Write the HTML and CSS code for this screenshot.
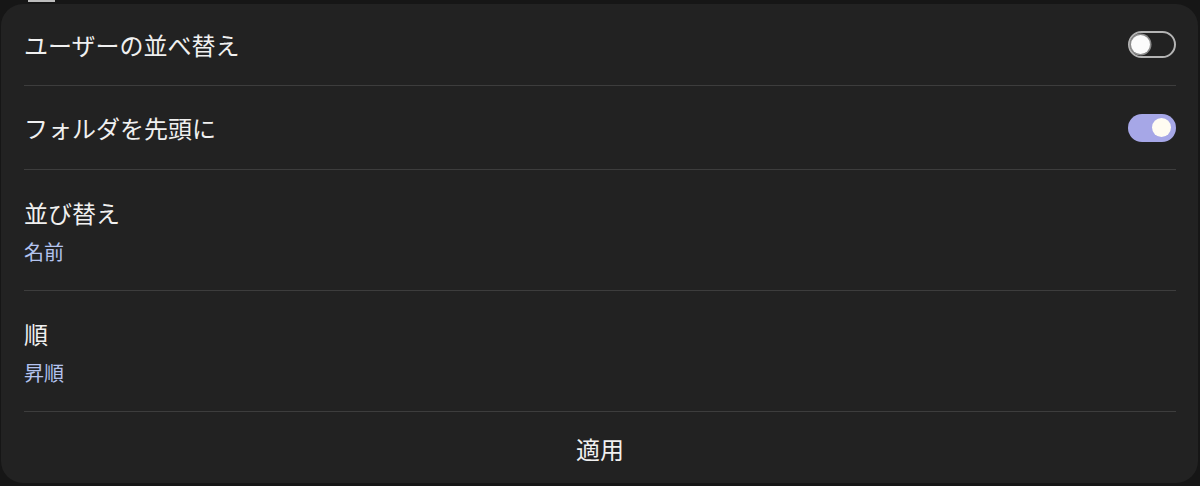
FILE: index.html
```html
<!DOCTYPE html>
<html lang="ja">
<head>
    <meta charset="UTF-8">
    <meta name="viewport" content="width=device-width, initial-scale=1.0">
    <title>並べ替え</title>
    <link rel="stylesheet" href="styles.css">
</head>
<body>
    <div class="pegangan"></div>

    <div class="panel">
        <div class="baris">
            <span class="judul">ユーザーの並べ替え</span>
            <div class="sakelar"><span class="bulat"></span></div>
        </div>
        <div class="baris">
            <span class="judul">フォルダを先頭に</span>
            <div class="sakelar aktif"><span class="bulat"></span></div>
        </div>
        <div class="baris pilihan">
            <span class="judul">並び替え</span>
            <span class="nilai">名前</span>
        </div>
        <div class="baris pilihan">
            <span class="judul">順</span>
            <span class="nilai">昇順</span>
        </div>
        <button class="tombol-terapkan">適用</button>
    </div>
</body>
</html>
```

FILE: styles.css
```css
body {
    font-family: "Noto Sans CJK JP", "Noto Sans", sans-serif;
    background-color: #161616;
    margin: 0;
    padding: 4px 2px 3px 1px;
    height: 486px;
    box-sizing: border-box;
}

.pegangan {
    position: absolute;
    top: 0;
    left: 28px;
    width: 27px;
    height: 2px;
    background: #bdbdbd;
}

.panel {
    background: #222222;
    border-radius: 22px;
    height: 100%;
    padding: 0 22px 0 23px;
    box-sizing: border-box;
    display: flex;
    flex-direction: column;
}

.baris {
    display: flex;
    align-items: center;
    justify-content: space-between;
    border-bottom: 1px solid #3d3d3d;
    height: 81px;
}

.baris + .baris {
    height: 83px;
}

.baris.pilihan {
    flex-direction: column;
    align-items: flex-start;
    justify-content: flex-start;
    height: 121px;
    padding-top: 27px;
    box-sizing: border-box;
    gap: 9px;
}

.judul {
    color: #f0f0f0;
    font-size: 24px;
    line-height: 32px;
}

.nilai {
    color: #b3c3ef;
    font-size: 20px;
    line-height: 28px;
}

.sakelar {
    width: 48px;
    height: 27px;
    border: 2px solid #b4b4b4;
    border-radius: 14px;
    box-sizing: border-box;
    display: flex;
    align-items: center;
    padding-left: 1px;
}

.sakelar .bulat {
    width: 19px;
    height: 19px;
    border-radius: 50%;
    background: #fbfbfb;
    box-shadow: 0 0 0 1.5px #8a8a8a;
}

.sakelar.aktif {
    border: none;
    height: 28px;
    background: #a6a7e7;
    justify-content: flex-end;
    padding-right: 5px;
}

.sakelar.aktif .bulat {
    width: 19px;
    height: 19px;
    background: #fffcf2;
    box-shadow: none;
}

.tombol-terapkan {
    flex: 1;
    background: none;
    border: none;
    color: #f0f0f0;
    font-family: inherit;
    font-size: 24px;
    padding: 1px 0 0;
    cursor: pointer;
}
```
